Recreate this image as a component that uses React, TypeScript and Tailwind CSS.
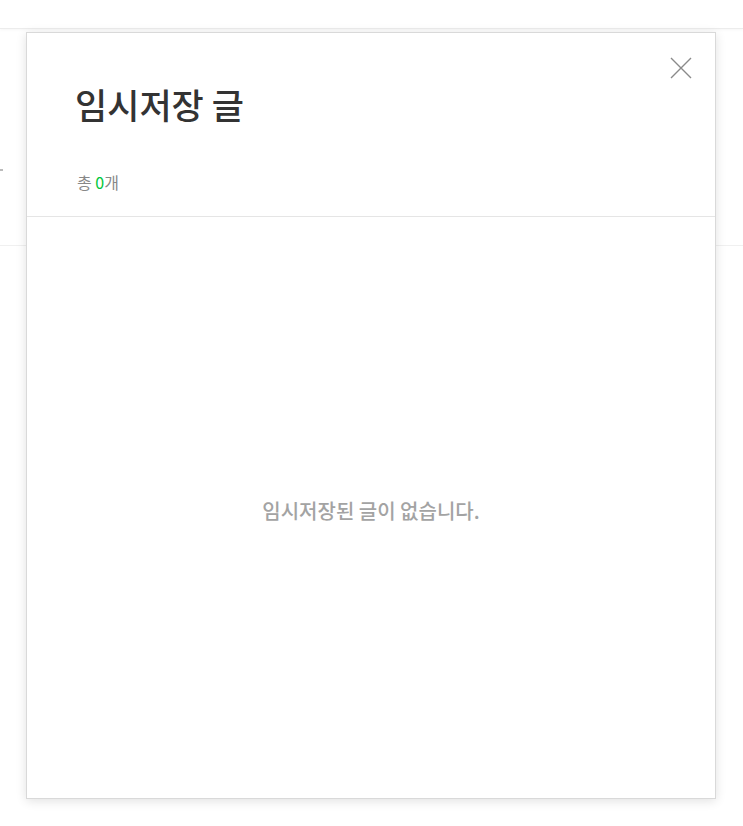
import React from "react";

export default function App() {
  const font = { fontFamily: '"Noto Sans CJK KR", "Noto Sans", sans-serif' };
  return (
    <div className="relative w-[743px] h-[826px] bg-white overflow-hidden" style={font}>
      {/* background page */}
      <div className="h-[29px] border-b border-[#ececec] shadow-[0_1px_3px_rgba(0,0,0,0.04)]" />
      <div className="h-[217px] border-b border-[#f0f0f0] flex items-center">
        <span className="block w-[3px] h-[2px] bg-[#bbb] mt-[66px]" />
      </div>

      {/* modal */}
      <div className="absolute left-[26px] top-[32px] w-[690px] h-[767px] bg-white border border-[#d9d9d9] shadow-[0_2px_10px_rgba(0,0,0,0.12)] flex flex-col">
        <div className="relative h-[184px] border-b border-[#e5e5e5] pl-[48px] pt-[46px]">
          <h1 className="text-[35px] leading-[50px] text-[#333] font-medium">임시저장 글</h1>
          <p className="mt-[42px] pl-[2px] text-[16px] leading-[22px] text-[#888]">
            총 <span className="text-[#00c73c]">0</span>개
          </p>
          <button className="absolute right-[22px] top-[23px] w-[24px] h-[24px] flex items-center justify-center">
            <svg width="22" height="22" viewBox="0 0 22 22" fill="none" stroke="#8a8a8a" strokeWidth="1.4">
              <path d="M1 1L21 21M21 1L1 21" />
            </svg>
          </button>
        </div>
        <div className="flex-1 flex items-center justify-center pt-[6px]">
          <p className="text-[20px] text-[#a3a3a3] font-medium">임시저장된 글이 없습니다.</p>
        </div>
      </div>
    </div>
  );
}
